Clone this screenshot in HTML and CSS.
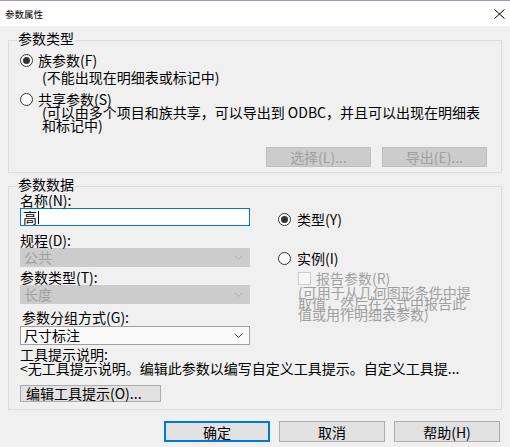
FILE: index.html
```html
<!DOCTYPE html>
<html lang="zh-CN">
<head>
    <meta charset="UTF-8">
    <title>参数属性</title>
    <link rel="stylesheet" href="styles.css">
</head>
<body>
    <div class="titlebar">
        <span class="title">参数属性</span>
        <svg class="close" width="11" height="10" viewBox="0 0 11 10">
            <path d="M0.5 0.5 L10.5 9.5 M10.5 0.5 L0.5 9.5" stroke="#000" stroke-width="1" fill="none"/>
        </svg>
    </div>

    <!-- 参数类型 -->
    <fieldset class="group group-type">
        <legend>参数类型</legend>
        <label class="radio-row first"><span class="radio checked"></span>族参数(F)</label>
        <div class="note">(不能出现在明细表或标记中)</div>
        <label class="radio-row shared"><span class="radio"></span>共享参数(S)</label>
        <div class="note wrapped">(可以由多个项目和族共享，可以导出到 ODBC，并且可以出现在明细表<br>和标记中)</div>
        <div class="shared-buttons">
            <button class="btn btn-disabled">选择(L)...</button>
            <button class="btn btn-disabled">导出(E)...</button>
        </div>
    </fieldset>

    <!-- 参数数据 -->
    <fieldset class="group group-data">
        <legend>参数数据</legend>
        <div class="data-grid">
            <div class="left-col">
                <div class="field-label">名称(N):</div>
                <div class="text-input">高<span class="caret"></span></div>

                <div class="field-label gap-l">规程(D):</div>
                <div class="select disabled">
                    <span>公共</span>
                    <svg width="9" height="5" viewBox="0 0 9 5"><polyline points="0.5,0.5 4.5,4.5 8.5,0.5" fill="none" stroke="#b0b0b0"/></svg>
                </div>

                <div class="field-label gap-s">参数类型(T):</div>
                <div class="select disabled">
                    <span>长度</span>
                    <svg width="9" height="5" viewBox="0 0 9 5"><polyline points="0.5,0.5 4.5,4.5 8.5,0.5" fill="none" stroke="#b0b0b0"/></svg>
                </div>

                <div class="field-label gap-m indent">参数分组方式(G):</div>
                <div class="select active">
                    <span>尺寸标注</span>
                    <svg width="9" height="5" viewBox="0 0 9 5"><polyline points="0.5,0.5 4.5,4.5 8.5,0.5" fill="none" stroke="#555"/></svg>
                </div>
            </div>

            <div class="right-col">
                <label class="radio-row type-row"><span class="radio checked"></span>类型(Y)</label>
                <label class="radio-row instance-row"><span class="radio"></span>实例(I)</label>
                <label class="check-row"><span class="checkbox"></span>报告参数(R)</label>
                <div class="instance-note">(可用于从几何图形条件中提<br>取值，然后在公式中报告此<br>值或用作明细表参数)</div>
            </div>
        </div>

        <div class="tooltip-label">工具提示说明:</div>
        <div class="tooltip-text">&lt;无工具提示说明。编辑此参数以编写自定义工具提示。自定义工具提...</div>
        <button class="btn btn-edit">编辑工具提示(O)...</button>
    </fieldset>

    <div class="footer">
        <button class="btn btn-default">确定</button>
        <button class="btn">取消</button>
        <button class="btn">帮助(H)</button>
    </div>
</body>
</html>
```

FILE: styles.css
```css
body {
    margin: 0;
    background: #f0f0f0;
    font-family: "Noto Sans CJK SC", "Noto Sans", sans-serif;
    font-size: 14px;
    color: #000;
}

/* window title bar */
.titlebar {
    height: 25px;
    border-top: 1px solid #9f95c6;
    background: #fff;
    display: flex;
    align-items: center;
    justify-content: space-between;
    padding: 0 5px 0 5px;
}

.title {
    font-size: 9.5px;
}

/* group boxes */
.group {
    margin: 5px 8px 0;
    padding: 0 14px 5px 11px;
    border: 1px solid #dcdcdc;
    min-width: 0;
}

/* legend text sits a little above the frame line */
.group legend {
    margin-left: -3px;
    padding: 0 1px 4px;
    line-height: 14px;
}

.group-data {
    margin-top: 4px;
    padding-bottom: 6px;
}

/* radio buttons */
.radio-row {
    display: flex;
    align-items: center;
    gap: 5px;
    line-height: 14px;
}

.radio {
    width: 13px;
    height: 13px;
    box-sizing: border-box;
    border: 1px solid #333;
    border-radius: 50%;
    background: #fff;
    display: flex;
    align-items: center;
    justify-content: center;
}

.radio.checked::after {
    content: "";
    width: 7px;
    height: 7px;
    border-radius: 50%;
    background: #333;
}

.radio-row.first {
    margin-top: 4px;
}

.radio-row.shared {
    margin-top: 8px;
}

.note {
    margin-left: 22px;
    margin-top: 3px;
    line-height: 14px;
}

.note.wrapped {
    margin-top: 0;
    line-height: 13px;
    white-space: nowrap;
}

/* buttons */
.btn {
    font-family: inherit;
    font-size: 14px;
    height: 21px;
    padding: 0;
    border: 1px solid #adadad;
    background: #e1e1e1;
    color: #000;
    line-height: 18px;
}

.shared-buttons {
    display: flex;
    justify-content: flex-end;
    gap: 11px;
    margin-top: 15px;
}

.btn-disabled {
    width: 105px;
    height: 20px;
    background: #cccccc;
    border-color: #bfbfbf;
    color: #a0a0a0;
}

/* parameter data */
.data-grid {
    display: grid;
    grid-template-columns: 230px 1fr;
    column-gap: 28px;
    margin-top: -2px;
}

.field-label {
    line-height: 14px;
}

.field-label.gap-s { margin-top: 3px; }
.field-label.gap-m { margin-top: 6px; }
.field-label.gap-l { margin-top: 7px; }
.field-label.indent { margin-left: 2px; }

.text-input {
    margin-top: 1px;
    height: 18px;
    box-sizing: border-box;
    border: 1px solid #0078d7;
    background: #fff;
    padding-left: 2px;
    display: flex;
    align-items: center;
    line-height: 16px;
}

.caret {
    display: inline-block;
    width: 1px;
    height: 13px;
    background: #000;
    margin-left: 1px;
}

.select {
    margin-top: 1px;
    height: 19px;
    box-sizing: border-box;
    border: 1px solid #adadad;
    display: flex;
    align-items: center;
    justify-content: space-between;
    padding: 0 6px 0 3px;
    line-height: 17px;
}

.select.disabled {
    background: #cccccc;
    border-color: #cccccc;
    color: #a0a0a0;
}

.select.active {
    margin-top: 2px;
    background: #fafafa;
    border-color: #a0a0a0;
}

.type-row {
    margin-top: 19px;
    gap: 6px;
}

.instance-row {
    margin-top: 25px;
    gap: 6px;
}

.check-row {
    display: flex;
    align-items: center;
    gap: 5px;
    margin: 6px 0 0 20px;
    line-height: 14px;
    color: #a0a0a0;
}

.checkbox {
    width: 13px;
    height: 13px;
    box-sizing: border-box;
    border: 1px solid #cccccc;
    background: #f7f7f7;
}

.instance-note {
    margin: 2px 0 0 20px;
    line-height: 11px;
    color: #a0a0a0;
    white-space: nowrap;
}

.tooltip-label {
    margin-top: 2px;
    line-height: 14px;
}

.tooltip-text {
    line-height: 14px;
    white-space: nowrap;
}

.btn-edit {
    margin-top: 10px;
    width: 141px;
    height: 17px;
    line-height: 15px;
    text-align: left;
    padding-left: 5px;
}

/* dialog buttons */
.footer {
    display: flex;
    justify-content: flex-end;
    gap: 9px;
    margin-top: 11px;
    padding-right: 10px;
}

.footer .btn {
    width: 106px;
}

.btn-default {
    border-color: #0078d7;
    box-shadow: inset 0 0 0 1px #0078d7;
}
```
